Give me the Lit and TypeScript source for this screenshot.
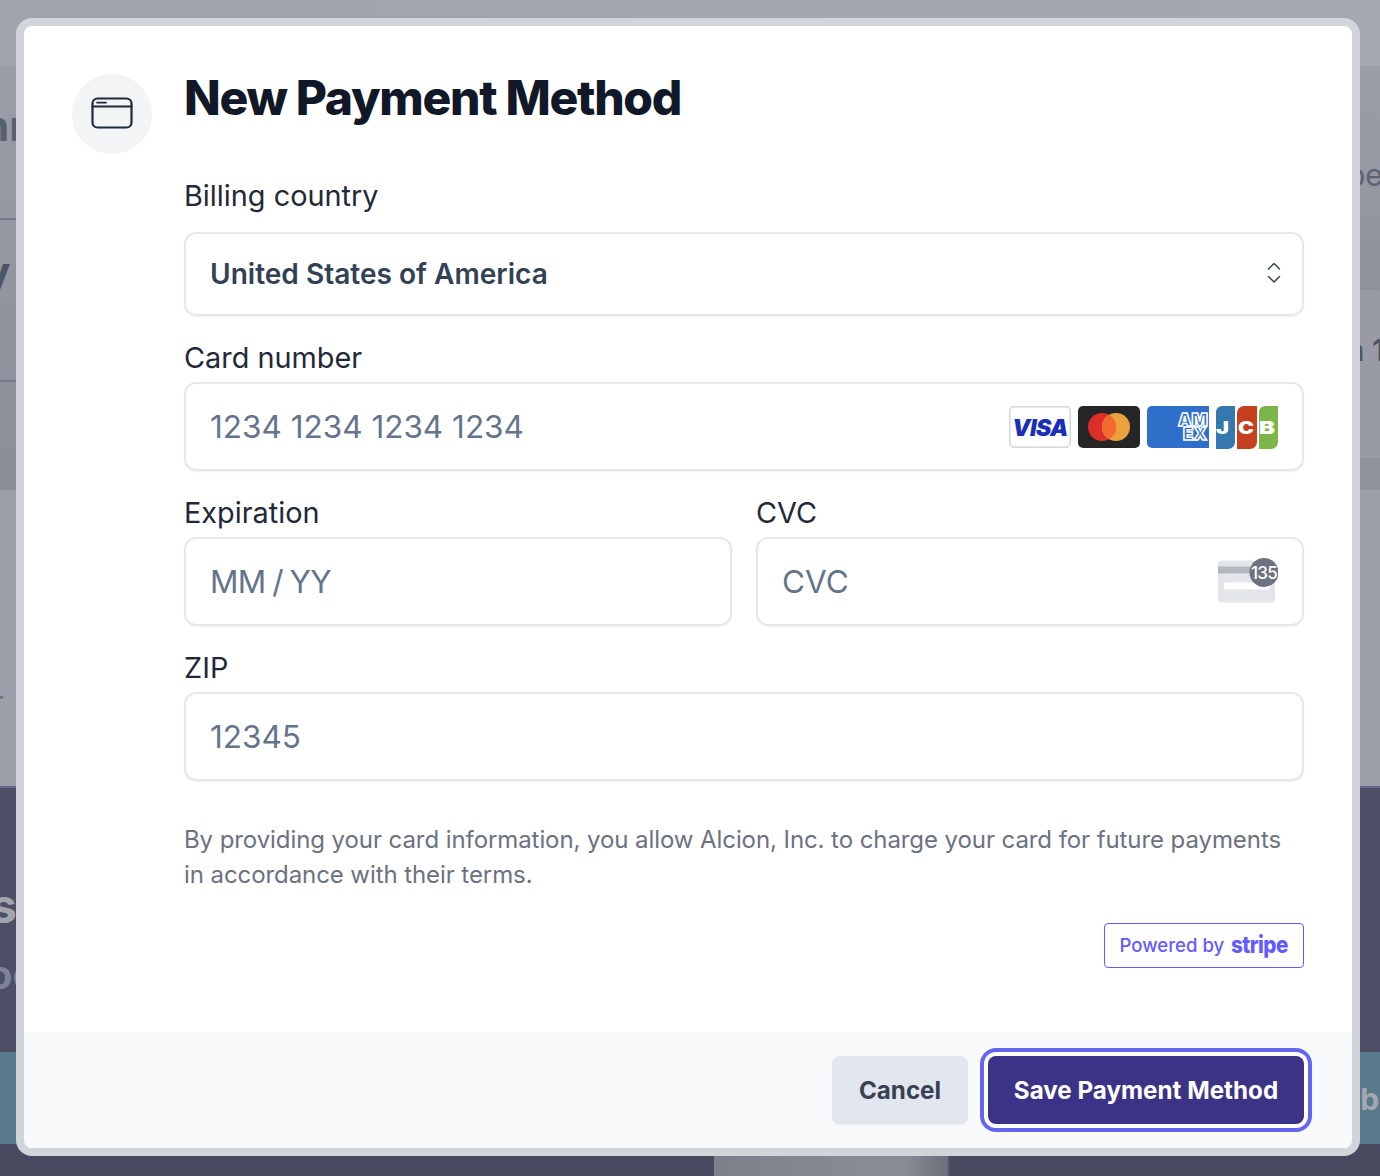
import { LitElement, html, css, svg } from "lit";
import { customElement } from "lit/decorators.js";

@customElement("app-root")
export class AppRoot extends LitElement {
  static styles = css`
    :host { display: block; position: relative; width: 1380px; height: 1176px; overflow: hidden; font-family: Inter, "Liberation Sans", sans-serif; background: #474a5e; }
    * { box-sizing: border-box; }
    .bg { display: flex; flex-direction: column; height: 1176px; }
    .b0 { height: 66px; background: linear-gradient(90deg, #a0a3ac, #a5a8b0); }
    .b1 { height: 424px; display: grid; grid-template-columns: 1fr 1fr; }
    .lc { background: linear-gradient(180deg, #9a9da6, #8b8e99); }
    .rc { display: flex; flex-direction: column; }
    .r1 { height: 224px; background: linear-gradient(180deg, #9b9ea8, #8f929d); }
    .r2 { height: 168px; background: #989ba5; }
    .r3 { flex: 1; background: #8f929d; }
    .b3 { height: 296px; background: #9c9fa9; }
    .b4 { height: 266px; background: #4c4f66; border-top: 2px solid #63668a; }
    .b5 { height: 92px; background: #587a8c; }
    .b6 { flex: 1; background: #474a5e; display: flex; justify-content: center; padding-left: 284px; }
    .b6 i { display: block; width: 236px; background: linear-gradient(90deg, #7d7f8a, #8b8d96 80%, #6c6e7b); border-right: 2px solid #4f5278; }
    .ghost { position: absolute; font-weight: 700; color: #566070; line-height: 1; white-space: nowrap; }
    .g1 { left: -17px; top: 105px; font-size: 42px; }
    .g2 { left: -16px; top: 250px; font-size: 44px; color: #4b5566; }
    .g3 { left: -7px; top: 688px; font-size: 28px; font-weight: 400; color: #6b7080; }
    .g4 { left: -10px; top: 882px; font-size: 48px; color: #a3a5ad; }
    .g5 { left: -12px; top: 955px; font-size: 40px; color: #7f829b; }
    .g6 { left: 1347px; top: 160px; font-size: 30px; font-weight: 400; color: #5d6270; }
    .g7 { left: 1346px; top: 335px; font-size: 30px; font-weight: 600; color: #4f5663; }
    .g8 { left: 1352px; top: 1084px; font-size: 30px; color: #a4a9b1; }
    .rule { position: absolute; left: 0; width: 20px; height: 2px; background: #74778a; }
    .modal { position: absolute; left: 16px; top: 18px; width: 1344px; height: 1138px; border: 8px solid #d1d5da; border-radius: 16px; background: #fff; display: flex; flex-direction: column; overflow: hidden; }
    .body { flex: 1; display: flex; gap: 32px; padding: 48px 48px 0; }
    .circle { width: 80px; height: 80px; flex: none; border-radius: 50%; background: #f3f4f6; display: flex; align-items: center; justify-content: center; }
    .circle svg { margin-top: -3px; }
    .main { flex: 1; min-width: 0; }
    h1 { margin: 0; font-size: 48px; line-height: 48px; font-weight: 800; letter-spacing: -1.3px; color: #111827; }
    label { display: block; font-size: 28.85px; line-height: 36px; color: #1f2937; margin-top: 24px; }
    .l0 { margin-top: 56px; }
    .field { margin-top: 6px; height: 89px; border: 2px solid #e5e7eb; border-radius: 12px; box-shadow: 0 1px 2px rgba(0,0,0,.05); display: flex; align-items: center; padding: 0 24px; justify-content: space-between; font-size: 31.5px; color: #64748b; }
    .select { margin-top: 18px; height: 84px; font-size: 28.05px; font-weight: 600; color: #334155; padding-right: 20px; }
    .select svg { margin-top: -3px; }
    .mm { word-spacing: -1.5px; letter-spacing: -.7px; }
    .row { display: grid; grid-template-columns: 1fr 1fr; gap: 24px; }
    .logos { display: flex; gap: 7px; margin-top: 2px; }
    .logos svg, .field > svg { display: block; }
    .note { margin: 41px 0 0; font-size: 24px; line-height: 35px; letter-spacing: -.08px; color: #6b7280; }
    .powered { display: flex; justify-content: flex-end; margin-top: 31px; }
    .badge { height: 45px; width: 200px; border: 1.5px solid #635bff; border-radius: 4px; display: flex; align-items: center; padding: 0 0 2px 14.500px; gap: 7px; color: #635bff; font-size: 18.6px; font-weight: 500; white-space: nowrap; }
    .badge b { display: inline-block; width: 56px; font-size: 24px; font-weight: 800; letter-spacing: -.6px; transform: scaleX(.86); transform-origin: left center; }
    .foot { height: 116px; background: #f9fafb; display: flex; justify-content: flex-end; align-items: center; gap: 20px; padding-right: 48px; }
    button { font: inherit; border: 0; height: 68px; border-radius: 8px; font-size: 24.2px; font-weight: 700; }
    .cancel { width: 136px; background: #e2e6ee; color: #374151; box-shadow: 0 1px 2px rgba(0,0,0,.05); }
    .save { width: 316px; background: #3b3385; color: #fff; box-shadow: 0 0 0 4px #fff, 0 0 0 8px #6366f1; }
  `;

  private visa() {
    return svg`<svg width="62" height="42" viewBox="0 0 62 42"><rect x=".75" y=".75" width="60.5" height="40.5" rx="4" fill="#fff" stroke="#d4d6da" stroke-width="1.5"/><text x="31" y="30" text-anchor="middle" font-family="Inter, sans-serif" font-size="23" font-weight="900" font-style="italic" letter-spacing="-.6" fill="#1a2fb8">VISA</text></svg>`;
  }
  private mc() {
    return svg`<svg width="62" height="42" viewBox="0 0 62 42"><rect width="62" height="42" rx="5" fill="#252525"/><circle cx="24" cy="21" r="14" fill="#dc2f2a"/><circle cx="38" cy="21" r="14" fill="#eba13d"/><path d="M31 8.8a14 14 0 0 1 0 24.4a14 14 0 0 1 0-24.4z" fill="#f26a2d"/></svg>`;
  }
  private amex() {
    return svg`<svg width="62" height="42" viewBox="0 0 62 42"><path d="M5 0h57v42H5a5 5 0 0 1-5-5V5a5 5 0 0 1 5-5z" fill="#2f6fc9"/><g font-family="Inter, sans-serif" font-size="17" font-weight="900" fill="#2f6fc9" stroke="#fff" stroke-width="1.5"><text x="31" y="20">AM</text><text x="36" y="34">EX</text></g></svg>`;
  }
  private jcb() {
    return svg`<svg width="62" height="44" viewBox="0 0 62 44"><path d="M6 0h13v36a7 7 0 0 1-7 7H0V6a6 6 0 0 1 6-6z" fill="#3578ad"/><path d="M28 0h13v36a7 7 0 0 1-7 7H21V7a7 7 0 0 1 7-7z" fill="#c63f1f"/><path d="M49 0h13v36a7 7 0 0 1-7 7H43V6a6 6 0 0 1 6-6z" fill="#7cb64a"/><g font-family="Inter, sans-serif" font-size="17.5" font-weight="900" fill="#fff"><text x="0" y="28" textLength="13" lengthAdjust="spacingAndGlyphs">J</text><text x="22" y="28" textLength="16" lengthAdjust="spacingAndGlyphs">C</text><text x="43" y="28" textLength="16" lengthAdjust="spacingAndGlyphs">B</text></g></svg>`;
  }
  private cvc() {
    return svg`<svg width="60" height="48" viewBox="0 0 60 48"><rect x="0" y="2.500" width="57" height="42" rx="4" fill="#e3e5e9"/><rect x="0" y="8.500" width="57" height="7" fill="#b3b7bf"/><rect x="6" y="24.500" width="46" height="7" rx="2" fill="#fff"/><circle cx="46" cy="14.500" r="14.500" fill="#6d7280"/><text x="46" y="20.500" text-anchor="middle" font-family="Inter, sans-serif" font-size="17" font-weight="500" letter-spacing="-.7" fill="#fff">135</text></svg>`;
  }

  render() {
    return html`
      <div class="bg">
        <div class="b0"></div>
        <div class="b1"><div class="lc"></div><div class="rc"><div class="r1"></div><div class="r2"></div><div class="r3"></div></div></div>
        <div class="b3"></div><div class="b4"></div><div class="b5"></div>
        <div class="b6"><i></i></div>
      </div>
      <div class="ghost g1">nr</div><div class="ghost g2">y</div><div class="ghost g3">r</div>
      <div class="ghost g4">s</div><div class="ghost g5">oc</div><div class="ghost g6">pe</div>
      <div class="ghost g7">n 1</div><div class="ghost g8">lb</div>
      <div class="rule" style="top:218px"></div><div class="rule" style="top:380px"></div>
      <div class="modal">
        <div class="body">
          <div class="circle">
            <svg width="42" height="32" viewBox="0 0 42 32" fill="none" stroke="#1f2937" stroke-width="2.2" stroke-linecap="round"><rect x="1.5" y="1.5" width="39" height="29" rx="5"/><path d="M1.5 9.5h39"/><path d="M6 5.6h9" stroke-width="1.8"/></svg>
          </div>
          <div class="main">
            <h1>New Payment Method</h1>
            <label class="l0">Billing country</label>
            <div class="field select"><span>United States of America</span>
              <svg width="16" height="24" viewBox="0 0 16 24" fill="none" stroke="#374151" stroke-width="1.5" stroke-linecap="round" stroke-linejoin="round"><path d="M2.5 8 8 2.5 13.500 8M2.500 15.500 8 21l5.500-5.500"/></svg>
            </div>
            <label>Card number</label>
            <div class="field"><span>1234 1234 1234 1234</span>
              <div class="logos">${this.visa()}${this.mc()}${this.amex()}${this.jcb()}</div>
            </div>
            <div class="row">
              <div><label>Expiration</label><div class="field"><span class="mm">MM / YY</span></div></div>
              <div><label>CVC</label><div class="field"><span>CVC</span>${this.cvc()}</div></div>
            </div>
            <label>ZIP</label>
            <div class="field">12345</div>
            <p class="note">By providing your card information, you allow Alcion, Inc. to charge your card for future payments in accordance with their terms.</p>
            <div class="powered"><div class="badge">Powered by <b>stripe</b></div></div>
          </div>
        </div>
        <div class="foot"><button class="cancel">Cancel</button><button class="save">Save Payment Method</button></div>
      </div>
    `;
  }
}
